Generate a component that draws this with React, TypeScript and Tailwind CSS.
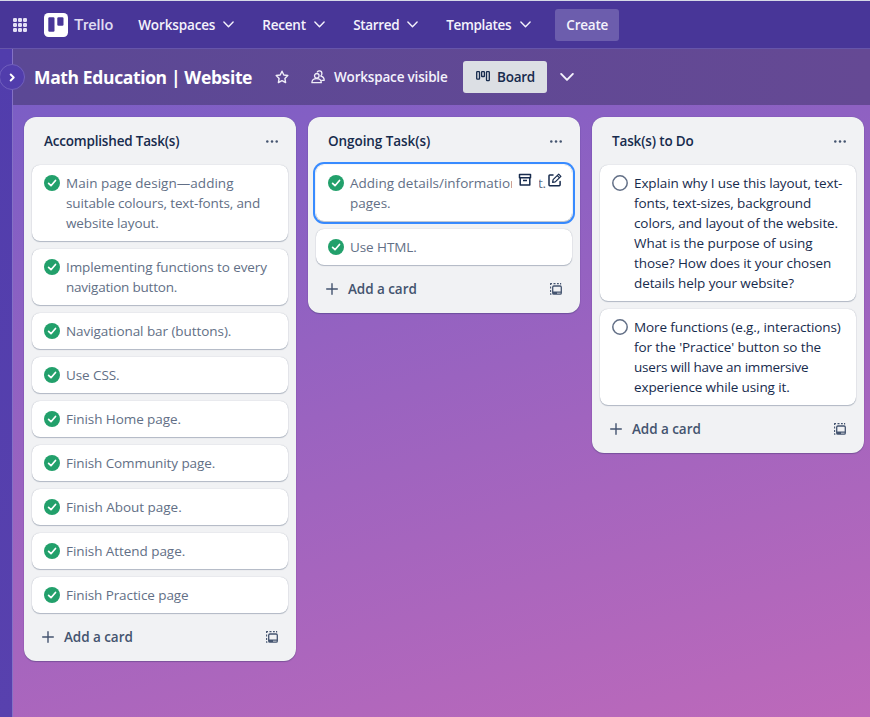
import React from 'react';

type Line = [text: string, tracking?: string];
type CardData = { lines: Line[]; active?: boolean };

const accomplished: CardData[] = [
  {
    lines: [
      ['Main page design—adding', 'tracking-[0.03px]'],
      ['suitable colours, text-fonts, and', 'tracking-[-0.13px]'],
      ['website layout.', 'tracking-[-0.12px]'],
    ],
  },
  {
    lines: [
      ['Implementing functions to every', 'tracking-[-0.1px]'],
      ['navigation button.', 'tracking-[-0.22px]'],
    ],
  },
  { lines: [['Navigational bar (buttons).', 'tracking-[-0.06px]']] },
  { lines: [['Use CSS.', 'tracking-[-0.08px]']] },
  { lines: [['Finish Home page.', 'tracking-[-0.07px]']] },
  { lines: [['Finish Community page.', 'tracking-[-0.09px]']] },
  { lines: [['Finish About page.', 'tracking-[-0.02px]']] },
  { lines: [['Finish Attend page.', 'tracking-[-0.06px]']] },
  { lines: [['Finish Practice page', 'tracking-[-0.09px]']] },
];

const ongoing: CardData[] = [
  { active: true, lines: [['Adding details/information'], ['pages.']] },
  { lines: [['Use HTML.', 'tracking-[-0.08px]']] },
];

const todo: CardData[] = [
  {
    lines: [
      ['Explain why I use this layout, text-', 'tracking-[-0.1px]'],
      ['fonts, text-sizes, background', 'tracking-[-0.1px]'],
      ['colors, and layout of the website.', 'tracking-[-0.1px]'],
      ['What is the purpose of using', 'tracking-[-0.05px]'],
      ['those? How does it your chosen', 'tracking-[-0.08px]'],
      ['details help your website?', 'tracking-[-0.1px]'],
    ],
  },
  {
    lines: [
      ['More functions (e.g., interactions)', 'tracking-[-0.11px]'],
      ["for the 'Practice' button so the", 'tracking-[-0.09px]'],
      ['users will have an immersive', 'tracking-[-0.22px]'],
      ['experience while using it.', 'tracking-[-0.11px]'],
    ],
  },
];

function Chevron({ size = 11 }: { size?: number }) {
  return (
    <svg width={size} height={size} viewBox="0 0 11 11" fill="none" stroke="currentColor" strokeWidth={size > 11 ? 1.5 : 1.4} strokeLinecap="round" strokeLinejoin="round" className="block shrink-0">
      <path d="M.9 3.1 5.5 7.8 10.1 3.1" />
    </svg>
  );
}

function AppsIcon() {
  return (
    <svg width="14" height="14" viewBox="0 0 14 14" fill="#e4e1f5" className="block shrink-0">
      {[0, 5, 10].map((y) => [0, 5, 10].map((x) => <rect key={`${x}-${y}`} x={x} y={y} width="4" height="4" rx="1.2" />))}
    </svg>
  );
}

function TrelloMark() {
  return (
    <svg width="24" height="24" viewBox="0 0 24 24" className="block shrink-0">
      <rect width="24" height="24" rx="4.5" fill="#fff" />
      <rect x="4.3" y="4.3" width="6.2" height="14.4" rx="1.2" fill="#483698" />
      <rect x="13.3" y="4.3" width="6.2" height="8.4" rx="1.2" fill="#483698" />
    </svg>
  );
}

function StarIcon() {
  return (
    <svg width="14" height="14" viewBox="0 0 14 14" fill="none" stroke="#f0eef8" strokeWidth="1.4" strokeLinejoin="round" className="block shrink-0">
      <path d="M7 1.200 8.800 5l4 .5-2.900 2.900.7 4.200L7 10.600l-3.600 2 .7-4.200L1.200 5.500l4-.5z" />
    </svg>
  );
}

function PeopleIcon() {
  return (
    <svg width="14" height="14" viewBox="0 0 14 14" fill="none" stroke="#f0eef8" strokeWidth="1.300" strokeLinejoin="round" strokeLinecap="round" className="block shrink-0">
      <circle cx="5.800" cy="5.800" r="2.300" />
      <path d="M.9 12.700c0-2.700 2-4.100 4.700-4.100s4.700 1.400 4.700 4.100z" />
      <path d="M6.400 1.900C6.900 1.100 7.600.8 8.400.8c1.500 0 2.500 1.200 2.500 2.600 0 1.100-.4 1.900-1.100 2.600 2.200.6 3.400 2 3.400 4.300h-2.500" />
    </svg>
  );
}

function BoardIcon() {
  return (
    <svg width="14" height="14" viewBox="0 0 14 14" fill="none" stroke="#172b4d" strokeWidth="1.300" className="block shrink-0">
      <rect x=".7" y="1.700" width="2.800" height="7.400" rx=".6" />
      <rect x="5.600" y="1.700" width="2.800" height="4.800" rx=".6" />
      <rect x="10.500" y="1.700" width="2.800" height="9" rx=".6" />
    </svg>
  );
}

function CheckIcon() {
  return (
    <svg width="16" height="16" viewBox="0 0 16 16" className="mt-0.5 block shrink-0">
      <circle cx="8" cy="8" r="8" fill="#22a06b" />
      <path d="M4.600 8.300 7 10.700 11.500 5.500" fill="none" stroke="#fff" strokeWidth="1.700" strokeLinecap="round" strokeLinejoin="round" />
    </svg>
  );
}

function OpenCircle() {
  return (
    <svg width="16" height="16" viewBox="0 0 16 16" className="mt-0.5 block shrink-0">
      <circle cx="8" cy="8" r="7.200" fill="none" stroke="#626f86" strokeWidth="1.500" />
    </svg>
  );
}

function ArchiveIcon() {
  return (
    <svg width="14" height="14" viewBox="0 0 14 14" fill="none" stroke="#172b4d" strokeWidth="1.500" strokeLinejoin="round" className="block">
      <path d="M2.200 4.800v7.100h9.600V4.800M1.500 1.400h11v3.400h-11zM5 7.500h4" />
    </svg>
  );
}

function EditIcon() {
  return (
    <svg width="14" height="14" viewBox="0 0 14 14" fill="none" stroke="#172b4d" strokeWidth="1.500" strokeLinejoin="round" strokeLinecap="round" className="block">
      <path d="M5 2H1.800Q1 2 1 2.800v9q0 .9.800.9h9.400q.9 0 .9-.9V8.600" />
      <path d="m4.600 9.400.5-2.700L10.700 1.100l2.200 2.200-5.600 5.600zM9.300 2.600l2.100 2.100" strokeWidth="1.200" />
    </svg>
  );
}

function TemplateIcon() {
  return (
    <svg width="12" height="12" viewBox="0 0 12 12" fill="none" stroke="#44546f" className="block shrink-0">
      <path d="M.6 2V.6H2M3.500.6h2M7 .6h1.800M10 .6h.6v.9M.6 3.500v2M.6 7v2M.6 10.300v.9h.8" strokeWidth="1.100" />
      <rect x="2.700" y="3" width="8.600" height="8.200" rx="1.200" strokeWidth="1.300" />
      <path d="M3 9.200h8M3 10.300h4" strokeWidth="1.200" />
    </svg>
  );
}

function Card({ card, done }: { card: CardData; done: boolean }) {
  return (
    <div
      className={
        card.active
          ? 'relative flex gap-1.5 rounded-lg bg-white px-3 py-2 shadow-[0_1px_1px_#091e4240,0_0_1px_#091e424f,0_0_0_1px_#fff,0_0_0_3px_#388bff]'
          : 'relative flex gap-1.5 rounded-lg bg-white px-3 py-2 shadow-[0_1px_1px_#091e4240,0_0_1px_#091e424f]'
      }
    >
      {done ? <CheckIcon /> : <OpenCircle />}
      <div className={done ? 'text-[13.5px] leading-5 text-[#626f86]' : 'text-[13.5px] leading-5 text-[#172b4d]'}>
        {card.lines.map(([text, tracking], i) =>
          card.active && i === 0 ? (
            <div key={text} className="flex whitespace-nowrap">
              <span className="w-[188px]">{text}</span>
              <span className="tracking-[-0.4px]">t.</span>
            </div>
          ) : (
            <div key={text} className={`whitespace-nowrap ${tracking ?? ''}`}>
              {text}
            </div>
          ),
        )}
      </div>
      {card.active && (
        <div className="absolute top-1 right-2.5 flex gap-[9px]">
          <div className="flex h-7 w-[27px] items-start bg-white pt-1 pl-1.5">
            <ArchiveIcon />
          </div>
          <div className="pt-1">
            <EditIcon />
          </div>
        </div>
      )}
    </div>
  );
}

function List({ title, tracking, cards, done }: { title: string; tracking: string; cards: CardData[]; done: boolean }) {
  return (
    <section className="w-[272px] shrink-0 rounded-xl bg-[#f1f2f4] px-2 pb-2 shadow-[0_1px_1px_#091e4240,0_0_1px_#091e424f]">
      <header className="flex h-12 items-center justify-between pr-2.5 pl-3">
        <h2 className={`text-[13.5px] leading-5 font-semibold text-[#172b4d] ${tracking}`}>{title}</h2>
        <svg width="12" height="3" viewBox="0 0 12 3" fill="#44546f" className="block">
          <circle cx="1.300" cy="1.500" r="1.250" />
          <circle cx="6" cy="1.500" r="1.250" />
          <circle cx="10.700" cy="1.500" r="1.250" />
        </svg>
      </header>
      <div className="flex flex-col gap-2">
        {cards.map((c) => (
          <Card key={c.lines[0][0]} card={c} done={done} />
        ))}
      </div>
      <footer className="mt-2 flex h-8 items-center pr-2.5 pl-2.5 text-[#44546f]">
        <svg width="12" height="12" viewBox="0 0 12 12" stroke="currentColor" strokeWidth="1.400" strokeLinecap="round" className="block">
          <path d="M6 .7v10.600M.7 6h10.600" />
        </svg>
        <span className="ml-2.5 text-[13.5px] leading-5 font-semibold tracking-[-0.06px]">Add a card</span>
        <span className="ml-auto">
          <TemplateIcon />
        </span>
      </footer>
    </section>
  );
}

function NavItem({ label, box, tracking }: { label: string; box: string; tracking: string }) {
  return (
    <button className={`flex items-center justify-between ${box}`}>
      <span className={`pt-0.5 ${tracking}`}>{label}</span>
      <Chevron />
    </button>
  );
}

export default function App() {
  return (
    <div className="flex h-[717px] w-[870px] flex-col overflow-hidden bg-[linear-gradient(164deg,#775dc6_5%,#bd69ba_100%)] font-['Open_Sans','Noto_Sans',sans-serif]">
      <nav className="flex h-[49px] shrink-0 items-center border-t border-b border-t-[#d5d9e6] border-b-[#6655aa] bg-[#483698] pl-[13px] text-[13.5px] font-semibold text-[#f4f2fc]">
        <AppsIcon />
        <div className="ml-[17px] flex items-center">
          <TrelloMark />
          <span className="ml-1.5 pt-0.5 font-['Roboto',sans-serif] text-[15.5px] font-medium text-[#dedaf1]">Trello</span>
        </div>
        <div className="ml-[25px] flex items-center gap-7">
          <NavItem label="Workspaces" box="w-24" tracking="tracking-[-0.14px]" />
          <NavItem label="Recent" box="w-[63px]" tracking="tracking-[-0.2px]" />
          <NavItem label="Starred" box="w-[65px]" tracking="tracking-[-0.34px]" />
          <NavItem label="Templates" box="w-[85px]" tracking="tracking-[-0.33px]" />
        </div>
        <button className="ml-6 h-8 w-16 rounded-[3px] bg-[#6c5dad] pt-0.5 tracking-[-0.2px]">Create</button>
      </nav>
      <div className="flex min-h-0 flex-1">
        <aside className="relative w-[13px] shrink-0 border-r border-[#8471c6] bg-[linear-gradient(#513dac,#5841ae)]">
          <button className="absolute top-[15px] left-[-1px] z-10 flex size-[26px] items-center justify-center rounded-full border border-[#7160bd] bg-[#513dac] text-white">
            <svg width="6" height="9" viewBox="0 0 6 9" fill="none" stroke="currentColor" strokeWidth="1.900" strokeLinecap="round" strokeLinejoin="round">
              <path d="M1.700 1.500 4.700 4.500 1.700 7.500" />
            </svg>
          </button>
        </aside>
        <main className="flex min-w-0 flex-1 flex-col">
          <div className="flex h-14 shrink-0 items-center bg-[linear-gradient(90deg,#5b4895,#654994)] pl-[21px] text-[13.5px] font-semibold text-[#f4f2fc]">
            <h1 className="w-[220px] text-[17.5px] font-bold tracking-[-0.37px] whitespace-nowrap text-white">Math Education | Website</h1>
            <div className="ml-[21px]">
              <StarIcon />
            </div>
            <div className="ml-[22px] flex items-center gap-[9px]">
              <PeopleIcon />
              <span className="w-[114px] tracking-[-0.18px] whitespace-nowrap">Workspace visible</span>
            </div>
            <button className="ml-[15px] flex h-8 w-[84px] items-center gap-[7px] rounded-[3px] bg-[#dcdfe4] pl-[13px] tracking-[-0.25px] text-[#172b4d]">
              <BoardIcon />
              Board
            </button>
            <div className="ml-[13px]">
              <Chevron size={14} />
            </div>
          </div>
          <div className="flex items-start gap-3 pt-3 pl-[11px]">
            <List title="Accomplished Task(s)" tracking="tracking-[-0.19px]" cards={accomplished} done />
            <List title="Ongoing Task(s)" tracking="tracking-[-0.07px]" cards={ongoing} done />
            <List title="Task(s) to Do" tracking="tracking-[-0.15px]" cards={todo} done={false} />
          </div>
        </main>
      </div>
    </div>
  );
}
